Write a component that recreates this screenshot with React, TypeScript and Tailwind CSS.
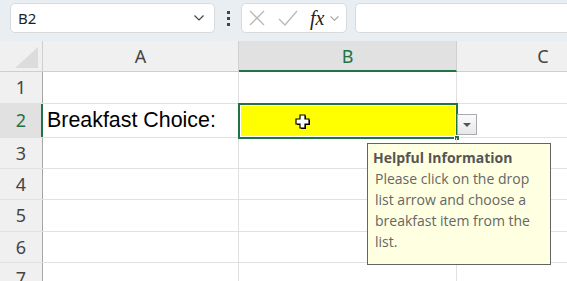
import React from 'react';

const rows = [
  { n: 1, h: 'h-[32px]' },
  { n: 2, h: 'h-[34px]' },
  { n: 3, h: 'h-[31px]' },
  { n: 4, h: 'h-[31px]' },
  { n: 5, h: 'h-[32px]' },
  { n: 6, h: 'h-[31px]' },
  { n: 7, h: 'h-[31px]' },
];

function Chevron({ className }: { className?: string }) {
  return (
    <svg viewBox="0 0 12 8" className={className} fill="none" stroke="currentColor" strokeWidth="1.2">
      <path d="M1.5 1.5 L6 6 L10.5 1.5" />
    </svg>
  );
}

function Toolbar() {
  return (
    <div className="h-[41px] bg-[#e9eef2] flex items-start pt-[3px] pl-[10px] gap-0">
      {/* Name box */}
      <div className="w-[205px] h-[30px] bg-white rounded-[5px] border border-[#d6dadd] flex items-center justify-between pl-[7px] pr-[9px]">
        <span className="text-[15px] text-[#1f1f1f]" style={{ fontFamily: '"Noto Sans", sans-serif' }}>B2</span>
        <Chevron className="w-[12px] h-[8px] text-[#444]" />
      </div>
      {/* dots */}
      <div className="w-[26px] h-[30px] flex flex-col items-center justify-center gap-[3px]">
        <div className="w-[3px] h-[3px] bg-[#444]" />
        <div className="w-[3px] h-[3px] bg-[#444]" />
        <div className="w-[3px] h-[3px] bg-[#444]" />
      </div>
      {/* formula buttons */}
      <div className="w-[106px] h-[30px] bg-white rounded-[5px] border border-[#d6dadd] flex items-center pl-[7px]">
        <svg viewBox="0 0 16 16" className="w-[16px] h-[16px]" stroke="#b8b8b8" strokeWidth="1.3" fill="none">
          <path d="M1 1 L15 15 M15 1 L1 15" />
        </svg>
        <svg viewBox="0 0 20 16" className="w-[20px] h-[16px] ml-[13px]" stroke="#b8b8b8" strokeWidth="1.3" fill="none">
          <path d="M1 9 L7 15 L19 1" />
        </svg>
        <span
          className="ml-[12px] text-[20px] italic text-[#222] leading-none"
          style={{ fontFamily: '"Liberation Serif", serif' }}
        >
          fx
        </span>
        <Chevron className="w-[11px] h-[7px] ml-[5px] text-[#9a9a9a]" />
      </div>
      {/* formula input */}
      <div className="flex-1 h-[30px] bg-white rounded-l-[5px] border border-r-0 border-[#d6dadd] ml-[8px]" />
    </div>
  );
}

function Header() {
  return (
    <div className="h-[31px] flex bg-[#f0f0f0] border-b border-[#cfcfcf] text-[#444] text-[18px]">
      <div className="w-[43px] shrink-0 border-r border-[#d0d0d0] relative flex items-end justify-end pr-[4px] pb-[3px]">
        <div className="w-[23px] h-[21px] bg-[#dcdcdc]" style={{ clipPath: 'polygon(100% 0, 100% 100%, 0 100%)' }} />
      </div>
      <div className="w-[196px] shrink-0 border-r border-[#d0d0d0] flex items-center justify-center">A</div>
      <div className="w-[218px] shrink-0 bg-[#e1e1e1] border-r border-[#cfcfcf] border-b-2 border-b-[#217346] text-[#217346] flex items-center justify-center -mb-px h-[31px] pt-[1px]">
        B
      </div>
      <div className="flex-1 flex items-center justify-center pl-[62px]">C</div>
    </div>
  );
}

export default function App() {
  return (
    <div className="w-[567px] h-[281px] overflow-hidden bg-white relative" style={{ fontFamily: '"Noto Sans", "Open Sans", sans-serif' }}>
      <Toolbar />
      <Header />
      {rows.map((r) => {
        const sel = r.n === 2;
        return (
          <div key={r.n} className={`${r.h} flex border-b border-[#e1e1e1]`}>
            <div
              className={`w-[43px] shrink-0 flex items-center justify-center text-[18px] ${
                sel
                  ? 'bg-[#e1e1e1] text-[#217346] border-r-2 border-[#217346] pl-[1px]'
                  : 'bg-[#f0f0f0] text-[#444] border-r border-[#a6a6a6]'
              }`}
            >
              {r.n}
            </div>
            <div className="w-[196px] shrink-0 border-r border-[#e1e1e1] flex items-center pl-[4px]">
              {sel && (
                <span className="text-[21.4px] text-black" style={{ fontFamily: '"Liberation Sans", sans-serif' }}>
                  Breakfast Choice:
                </span>
              )}
            </div>
            <div className="w-[218px] shrink-0 border-r border-[#e1e1e1] relative">
              {sel && (
                <div className="absolute -left-px -top-px w-[220px] h-[36px] border-2 border-[#217346]">
                  <div className="w-full h-full border border-white bg-[#ffff00]" />
                  <div className="absolute -right-[4px] -bottom-[4px] w-[6px] h-[6px] bg-[#217346] border border-white" />
                </div>
              )}
            </div>
            <div className="flex-1" />
          </div>
        );
      })}

      {/* dropdown arrow button */}
      <div className="absolute left-[457px] top-[114px] w-[20px] h-[21px] border border-[#a7abb0] bg-gradient-to-b from-[#fafafa] to-[#e8e8e8] flex items-center justify-center">
        <div className="w-0 h-0 border-l-[4px] border-r-[4px] border-t-[4px] border-l-transparent border-r-transparent border-t-[#555]" />
      </div>

      {/* cursor */}
      <svg className="absolute left-[294px] top-[113px]" width="18" height="18" viewBox="0 0 18 18">
        <path d="M6 2 H11 V6 H15 V11 H11 V15 H6 V11 H2 V6 H6 Z" fill="#000" transform="translate(1 1)" />
        <path d="M6 2 H11 V6 H15 V11 H11 V15 H6 V11 H2 V6 H6 Z" fill="#fff" stroke="#000" strokeWidth="1.2" />
      </svg>

      {/* input message */}
      <div
        className="absolute left-[367px] top-[143px] w-[184px] h-[122px] bg-[#ffffe1] border border-[#646464] pl-[5px] pt-[3px] text-[14px] leading-[21px] text-[#666]"
        style={{ fontFamily: '"Open Sans", "Noto Sans", sans-serif' }}
      >
        <div className="font-bold text-[#555]">Helpful Information</div>
        <div className="pl-[2px]">Please click on the drop list arrow and choose a breakfast item from the list.</div>
      </div>
    </div>
  );
}
